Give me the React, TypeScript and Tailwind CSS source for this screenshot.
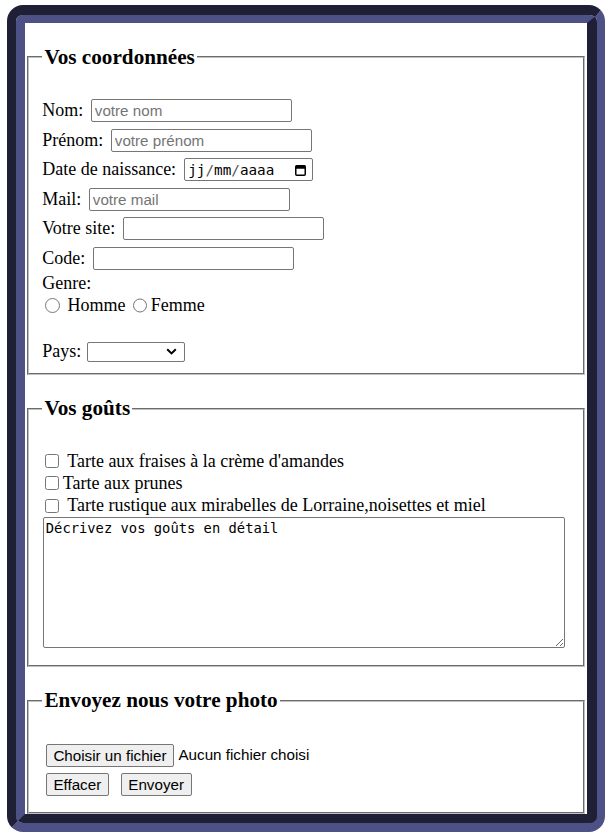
import React from "react";

function TextRow({ label, placeholder, gap }: { label: string; placeholder?: string; gap: string }) {
  return (
    <div className={`flex h-[23px] items-center ${gap}`}>
      <span className="whitespace-nowrap">{label}</span>
      <input
        type="text"
        placeholder={placeholder}
        className="box-border h-[23px] w-[201px] rounded-[2px] border border-[#767676] bg-white px-[3px] font-['Liberation_Sans',Arial,sans-serif] text-[15.2px] text-black placeholder:text-[#757575] outline-none"
      />
    </div>
  );
}

function CheckLine({ text, space = true }: { text: string; space?: boolean }) {
  return (
    <div className="flex h-[22.3px] items-center">
      <input type="checkbox" className="m-0 ml-[3.3px] mr-[3.3px] h-[14px] w-[14px]" />
      <span className={space ? "ml-[4.4px] whitespace-nowrap" : "whitespace-nowrap"}>{text}</span>
    </div>
  );
}

const fieldsetCls =
  "mx-[2px] mt-[21.5px] min-w-0 border-2 [border-style:groove] border-[#c0c0c0] px-[13.2px] pt-[6.2px] pb-[11px]";
const legendCls = "px-[2.2px] text-[21.2px] font-bold leading-[25.3px]";
const btnCls =
  "box-border h-[23px] rounded-[2px] border border-[#767676] bg-[#efefef] px-[6.6px] font-['Liberation_Sans',Arial,sans-serif] text-[15.2px] leading-none text-black";

export default function App() {
  return (
    <div className="min-h-screen bg-white pl-[7px] pt-[5px]">
      <div className="w-[598px] rounded-[16px] border-t-[10px] border-l-[9px] border-r-[8px] border-b-[9px] border-t-[#1f1f35] border-l-[#1f1f35] border-r-[#4e5185] border-b-[#4e5185]">
        <div className="overflow-hidden rounded-[7px] border-t-[8px] border-l-[9px] border-r-[10px] border-b-[9px] border-t-[#4e5185] border-l-[#4e5185] border-r-[#1f1f35] border-b-[#1f1f35] bg-white font-['Liberation_Serif','Times_New_Roman',serif] text-[18px] leading-normal text-black">
          {/* Fieldset 1 */}
          <fieldset className={fieldsetCls}>
            <legend className={legendCls}>Vos coordonnées</legend>
            <div className="h-[23px]" />
            <div className="flex flex-col gap-[6.6px]">
              <TextRow label="Nom:" placeholder="votre nom" gap="gap-[7.6px]" />
              <TextRow label="Prénom:" placeholder="votre prénom" gap="gap-[7.6px]" />
              <div className="flex h-[23px] items-center gap-[8.1px]">
                <span className="whitespace-nowrap">Date de naissance:</span>
                <div className="box-border flex h-[23px] w-[129px] items-center justify-between rounded-[2px] border border-[#767676] pl-[3px] pr-[6px]">
                  <span className="font-['DejaVu_Sans_Mono',monospace] text-[14.3px] leading-none">
                    jj<span className="text-[#555]">/</span>mm<span className="text-[#555]">/</span>aaaa
                  </span>
                  <svg width="11" height="11" viewBox="0 0 11 11" className="mt-[1px]">
                    <rect x="0.75" y="0.75" width="9.5" height="9.5" rx="1" fill="none" stroke="#000" strokeWidth="1.5" />
                    <rect x="0.75" y="0.75" width="9.5" height="3" fill="#000" />
                  </svg>
                </div>
              </div>
              <TextRow label="Mail:" placeholder="votre mail" gap="gap-[7.6px]" />
              <TextRow label="Votre site:" gap="gap-[8.1px]" />
              <TextRow label="Code:" gap="gap-[7.6px]" />
            </div>
            <div className="mt-[3px] h-[20px] leading-[20px]">Genre:</div>
            <div className="flex h-[25px] items-center">
              <input type="radio" name="genre" className="m-0 ml-[3.3px] mr-[3.3px] h-[14.3px] w-[14.3px]" />
              <span className="ml-[4.4px]">Homme</span>
              <input type="radio" name="genre" className="m-0 ml-[7.6px] mr-[3.3px] h-[14.3px] w-[14.3px]" />
              <span>Femme</span>
            </div>
            <div className="h-[24px]" />
            <div className="flex h-[20px] items-center gap-[5.3px]">
              <span>Pays:</span>
              <div className="box-border flex h-[20px] w-[98px] items-center justify-end rounded-[2px] border border-[#767676] bg-white pr-[7px]">
                <svg width="11" height="7" viewBox="0 0 11 7">
                  <path d="M1.2 1.2 L5.5 5.4 L9.8 1.2" fill="none" stroke="#000" strokeWidth="2" />
                </svg>
              </div>
            </div>
          </fieldset>

          {/* Fieldset 2 */}
          <fieldset className={fieldsetCls}>
            <legend className={legendCls}>Vos goûts</legend>
            <div className="h-[22px]" />
            <CheckLine text="Tarte aux fraises à la crème d'amandes" />
            <CheckLine text="Tarte aux prunes" space={false} />
            <CheckLine text="Tarte rustique aux mirabelles de Lorraine,noisettes et miel" />
            <textarea
              className="ml-[0.6px] box-border block h-[131px] w-[522px] rounded-[2px] border border-[#767676] px-[2px] py-[2px] font-['DejaVu_Sans_Mono',monospace] text-[13.8px] leading-[16px] text-black outline-none"
              defaultValue="Décrivez vos goûts en détail"
            />
            <div className="h-[6px]" />
          </fieldset>

          {/* Fieldset 3 */}
          <fieldset className={fieldsetCls}>
            <legend className={legendCls}>Envoyez nous votre photo</legend>
            <div className="h-[24px]" />
            <div className="flex h-[23px] items-center">
              <button type="button" className={`${btnCls} ml-[3.6px]`}>Choisir un fichier</button>
              <span className="ml-[4.4px] font-['Liberation_Sans',Arial,sans-serif] text-[15.2px]">Aucun fichier choisi</span>
            </div>
            <div className="mt-[6px] flex h-[23px] items-center">
              <button type="button" className={`${btnCls} ml-[3.6px]`}>Effacer</button>
              <button type="button" className={`${btnCls} ml-[11.9px]`}>Envoyer</button>
            </div>
            <div className="h-[4.7px]" />
          </fieldset>
        </div>
      </div>
    </div>
  );
}
